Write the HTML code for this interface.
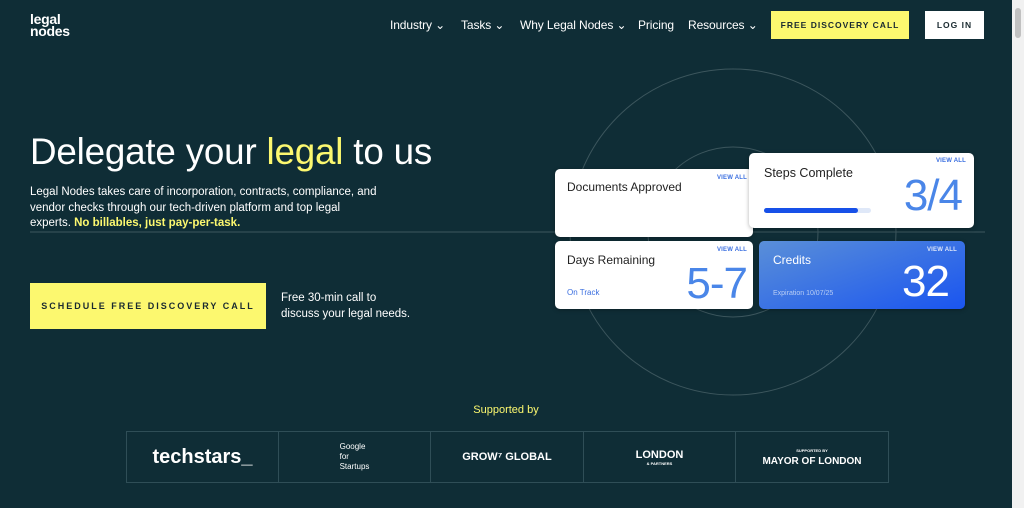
<!DOCTYPE html>
<html><head><style>
*{margin:0;padding:0;box-sizing:border-box}
body{width:1024px;height:508px;background:#0f2d36;font-family:"Liberation Sans",sans-serif;position:relative;overflow:hidden;color:#fff}
.a{position:absolute}
.nav{font-size:12px;color:#fff;top:18px;letter-spacing:-.1px}
.card{position:absolute;background:#fff;border-radius:5px;color:#222;box-shadow:0 1px 4px rgba(0,0,0,.3)}
.va{position:absolute;font-size:6px;font-weight:bold;color:#3b6fe0;letter-spacing:.2px}
.big{position:absolute;color:#4a86e8;font-size:44px;letter-spacing:-1px}
.t{position:absolute;font-size:12px;color:#222}
.logo{position:absolute;top:431px;height:52px;border:1px solid #2f4e57;display:flex;align-items:center;justify-content:center;color:#fff}
</style></head><body>
<div class="a" style="left:30px;top:13px;font-size:14px;line-height:12px;font-weight:bold;letter-spacing:-.3px">legal<br>nodes</div>
<div class="a nav" style="left:390px">Industry ⌄</div>
<div class="a nav" style="left:461px">Tasks ⌄</div>
<div class="a nav" style="left:520px">Why Legal Nodes ⌄</div>
<div class="a nav" style="left:638px">Pricing</div>
<div class="a nav" style="left:688px">Resources ⌄</div>
<div class="a" style="left:771px;top:11px;width:138px;height:28px;background:#fcf86f;color:#1a2a30;font-size:8.5px;font-weight:bold;letter-spacing:1px;display:flex;align-items:center;justify-content:center">FREE DISCOVERY CALL</div>
<div class="a" style="left:925px;top:11px;width:59px;height:28px;background:#fff;color:#1a2a30;font-size:8.5px;font-weight:bold;letter-spacing:1px;display:flex;align-items:center;justify-content:center">LOG IN</div>
<div class="a" style="left:1012px;top:0;width:12px;height:508px;background:#f1f1f1"></div>
<div class="a" style="left:1015px;top:8px;width:6px;height:30px;background:#c1c1c1;border-radius:3px"></div>
<svg class="a" style="left:0;top:0" width="1012" height="508"><circle cx="733" cy="232" r="163" fill="none" stroke="#3c565d" stroke-width="1"/><circle cx="733" cy="232" r="85" fill="none" stroke="#3c565d" stroke-width="1"/><line x1="30" y1="232" x2="985" y2="232" stroke="#3c565d"/></svg>
<div class="a" style="left:30px;top:131px;font-size:36.8px;letter-spacing:-.2px">Delegate your <span style="color:#fcf86f">legal</span> to us</div>
<div class="a" style="left:30px;top:185px;font-size:11.5px;line-height:15.5px;width:352px">Legal Nodes takes care of incorporation, contracts, compliance, and vendor checks through our tech-driven platform and top legal experts. <b style="color:#fcf86f">No billables, just pay-per-task.</b></div>
<div class="a" style="left:30px;top:283px;width:236px;height:46px;background:#fcf86f;color:#1a2a30;font-size:9px;font-weight:bold;letter-spacing:2px;display:flex;align-items:center;justify-content:center">SCHEDULE FREE DISCOVERY CALL</div>
<div class="a" style="left:281px;top:291px;font-size:11.5px;line-height:15.5px">Free 30-min call to<br>discuss your legal needs.</div>
<div class="card" style="left:555px;top:169px;width:198px;height:68px"><div class="va" style="right:6px;top:6px">VIEW ALL</div><div class="t" style="left:12px;top:11px">Documents Approved</div></div>
<div class="card" style="left:555px;top:241px;width:198px;height:68px"><div class="va" style="right:6px;top:6px">VIEW ALL</div><div class="t" style="left:12px;top:12px">Days Remaining</div><div class="big" style="right:6px;top:18px">5-7</div><div class="a" style="left:12px;top:47px;font-size:8px;color:#3b6fe0">On Track</div></div>
<div class="card" style="left:749px;top:153px;width:225px;height:75px"><div class="va" style="right:8px;top:5px">VIEW ALL</div><div class="t" style="left:15px;top:13px;font-size:12.5px">Steps Complete</div><div class="big" style="right:12px;top:18px">3/4</div><div class="a" style="left:15px;top:55px;width:107px;height:5px;background:#dfe8f8;border-radius:3px"><div style="width:94px;height:5px;background:#1750e8;border-radius:3px"></div></div></div>
<div class="card" style="left:759px;top:241px;width:206px;height:68px;background:linear-gradient(160deg,#5a8fd8,#1a55f0);color:#fff"><div class="va" style="right:8px;top:6px;color:#dde6fa">VIEW ALL</div><div class="t" style="left:14px;top:12px;color:#fff">Credits</div><div class="big" style="right:16px;top:16px;color:#fff">32</div><div class="a" style="left:14px;top:49px;font-size:7px;color:#b8cdf5">Expiration 10/07/25</div></div>
<div class="a" style="left:0;width:1012px;top:404px;text-align:center;font-size:11px;color:#fcf86f">Supported by</div>
<div class="logo" style="left:126px;width:153px;font-size:20px;font-weight:bold">techstars_</div>
<div class="logo" style="left:278px;width:153px;font-size:8px;line-height:10px"><div>Google<br>for<br>Startups</div></div>
<div class="logo" style="left:430px;width:154px;font-size:11px;font-weight:bold">GROW⁷ GLOBAL</div>
<div class="logo" style="left:583px;width:153px;font-size:11px;font-weight:bold;text-align:center"><div>LONDON<div style="font-size:4px">&amp; PARTNERS</div></div></div>
<div class="logo" style="left:735px;width:154px;font-size:10px;font-weight:bold;text-align:center"><div><div style="font-size:4px;margin-bottom:3px">SUPPORTED BY</div>MAYOR OF LONDON</div></div>
</body></html>
